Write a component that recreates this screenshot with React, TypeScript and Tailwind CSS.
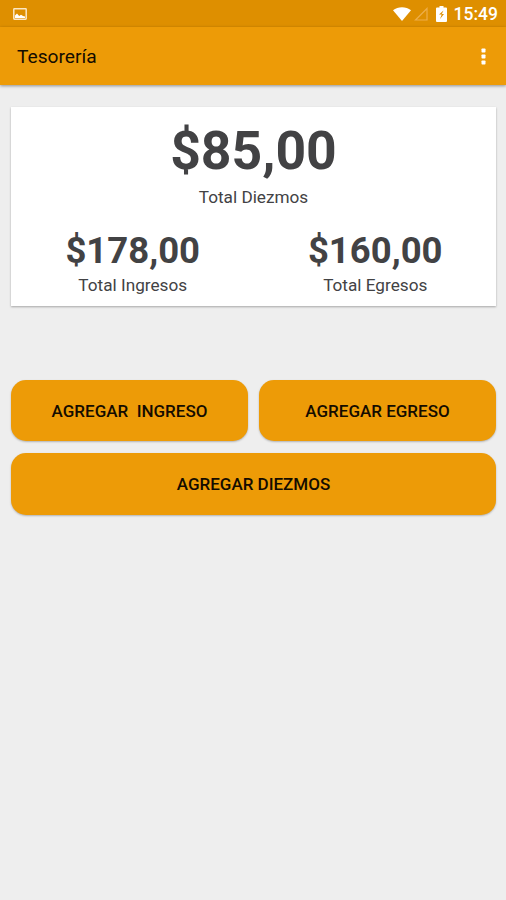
import React from 'react';

const totals = [
  { label: 'Total Ingresos', amount: '$178,00' },
  { label: 'Total Egresos', amount: '$160,00' },
];

const actionClass =
  'rounded-[15px] bg-[#ed9b07] pt-[2px] text-[17px] font-medium text-[#140c00] whitespace-pre shadow-[0_1px_2px_rgba(0,0,0,0.25)]';

const StatusBar = () => (
  <div className="flex h-[27px] items-center justify-between bg-[#de8f00] pl-[13px] pr-2">
    <svg width="14" height="12" viewBox="0 0 14 12" fill="none">
      <rect x="0.8" y="0.8" width="12.4" height="10.4" rx="0.6" stroke="#fbe6c2" strokeWidth="1.5" />
      <path d="M2 10V7.500L4 5.500l2.200 2.500L8 6.800l2 1.200 2 .5V10z" fill="#fff" />
    </svg>
    <div className="flex items-center">
      <svg width="18" height="14" viewBox="0 0 18 14" className="mr-[3px]">
        <path d="M0 3.2C5-.8 13-.8 18 3.2L9 14z" fill="#fff" />
      </svg>
      <svg width="14" height="14" viewBox="0 0 14 14" className="mr-2">
        <path d="M13 1.5V13H1.5z" fill="none" stroke="#edae4a" strokeWidth="1.2" />
      </svg>
      <svg width="11" height="16" viewBox="0 0 11 16" className="mr-[7px]">
        <path fillRule="evenodd" d="M3.5 0h4v1.6H10a1 1 0 0 1 1 1V15a1 1 0 0 1-1 1H1a1 1 0 0 1-1-1V2.600a1 1 0 0 1 1-1h2.500zM7.500 4.500L3 8.600h2.700L4 13l4-5H5.800z" fill="#fff" />
      </svg>
      <span className="pt-[2px] text-[17.5px] font-medium leading-none text-white">15:49</span>
    </div>
  </div>
);

const App = () => {
  return (
    <div className="h-[900px] w-[506px] overflow-hidden bg-[#eeeeee] font-['Roboto',sans-serif]">
      <StatusBar />
      <header className="flex h-[58px] items-center justify-between bg-[#ed9b07] pl-[17px] pr-5 shadow-[0_1px_3px_rgba(0,0,0,0.4)]">
        <h1 className="pt-[3px] text-[19.2px] text-[#140c00]">Tesorería</h1>
        <button aria-label="Más opciones">
          <svg width="5" height="17" viewBox="0 0 5 17" fill="#fff">
            <rect x="0.5" y="0.5" width="4" height="4" rx="0.7" />
            <rect x="0.5" y="6.5" width="4" height="4" rx="0.7" />
            <rect x="0.5" y="12.5" width="4" height="4" rx="0.7" />
          </svg>
        </button>
      </header>

      <main className="pl-[11px] pr-2.5 pt-[22px]">
        <section className="h-[199px] bg-white pt-3 text-center text-[#424244] shadow-[0_1px_2px_rgba(0,0,0,0.3)]">
          <div className="text-[53.5px] font-bold leading-[63px]">$85,00</div>
          <div className="pt-[3px] text-[17.2px] leading-6">Total Diezmos</div>
          <div className="mt-[19px] grid grid-cols-2">
            {totals.map((total) => (
              <div key={total.label} className="pl-px">
                <div className="text-[36.5px] font-bold leading-[45px]">{total.amount}</div>
                <div className="text-[17.2px] leading-6">{total.label}</div>
              </div>
            ))}
          </div>
        </section>

        {/* Acciones */}
        <div className="mt-[74px] grid grid-cols-2 gap-x-[11px] gap-y-3">
          <button className={`${actionClass} h-[61px]`}>{'AGREGAR  INGRESO'}</button>
          <button className={`${actionClass} h-[61px]`}>AGREGAR EGRESO</button>
          <button className={`${actionClass} col-span-2 h-[62px]`}>AGREGAR DIEZMOS</button>
        </div>
      </main>
    </div>
  );
};

export default App;
